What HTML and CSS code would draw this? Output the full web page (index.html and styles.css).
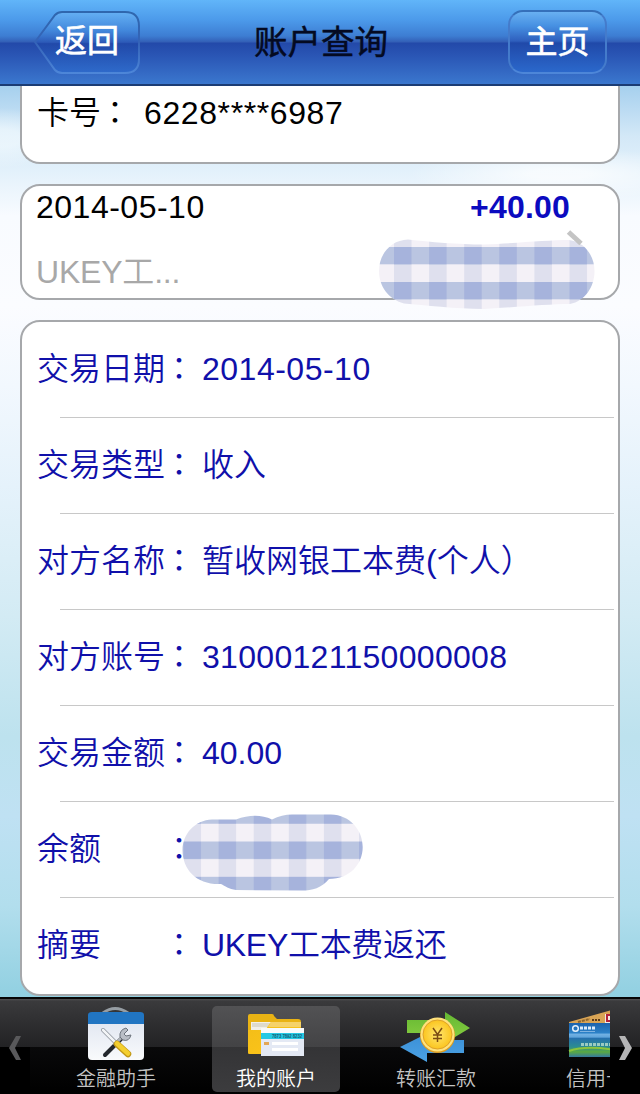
FILE: index.html
```html
<!DOCTYPE html>
<html lang="zh-CN">
<head>
  <meta charset="UTF-8" />
  <meta name="viewport" content="width=device-width, initial-scale=1.0"/>
  <title>账户查询</title>
  <link rel="stylesheet" href="styles.css">
</head>
<body>
  <div class="app">
    <!-- Header -->
    <header class="header">
      <button class="btn btn-back">
        <svg class="btn-shape" width="108" height="66" viewBox="0 0 108 66">
          <defs>
            <linearGradient id="btnFill" x1="0" y1="0" x2="0" y2="1">
              <stop offset="0" stop-color="#6bb4f4"/>
              <stop offset="0.3" stop-color="#4288dc"/>
              <stop offset="0.5" stop-color="#2a58b8"/>
              <stop offset="0.52" stop-color="#2049a9"/>
              <stop offset="1" stop-color="#2d6bcd"/>
            </linearGradient>
            <linearGradient id="btnEdge" x1="0" y1="0" x2="0" y2="1">
              <stop offset="0" stop-color="#2f67ae"/>
              <stop offset="0.5" stop-color="#3463b8"/>
              <stop offset="1" stop-color="#4d86d8"/>
            </linearGradient>
          </defs>
          <path d="M2 32 L22 5 Q25 2 29 2 H92 Q106 2 106 16 V49 Q106 63 92 63 H29 Q25 63 22 60 Z" fill="url(#btnFill)" fill-opacity="0.75" stroke="url(#btnEdge)" stroke-width="2"/>
        </svg>
        <span>返回</span>
      </button>
      <h1>账户查询</h1>
      <button class="btn btn-home"><span>主页</span></button>
    </header>

    <!-- Account details -->
    <main class="content">
      <div class="card card-number">
        <span class="label">卡号</span><span class="colon">：</span><span class="number">6228****6987</span>
      </div>

      <div class="card card-entry">
        <div class="entry-top">
          <span class="date">2014-05-10</span>
          <span class="amount">+40.00</span>
        </div>
        <div class="entry-note">UKEY工...</div>
        <svg class="mask mask-entry" width="218" height="72" viewBox="378 238 218 72">
          <defs>
            <pattern id="check1" x="394" y="247" width="35.1" height="35" patternUnits="userSpaceOnUse">
              <rect width="36" height="36" fill="#f4f1f7"/>
              <rect width="17.5" height="36" fill="#dfe0ee"/>
              <rect width="36" height="17.3" fill="#bac5e1"/>
              <rect width="17.5" height="17.3" fill="#a6b3dc"/>
            </pattern>
          </defs>
          <path d="M408 239.500 C430 242 458 244.500 484 244.500 C520 243 548 240 569 240 C585 242 594.500 256 594.500 271 C594.500 287 585 301 570 304 C548 304 520 307 484 309 C455 309 425 305 404 303.500 C388 299 379 286 379 271 C379 254 391 240 408 239.500 Z" fill="url(#check1)"/>
        </svg>
        <svg class="chevron" width="18" height="16" viewBox="0 0 18 16">
          <path d="M2.500 2 L15 13.500" fill="none" stroke="#c4c4c4" stroke-width="5"/>
        </svg>
      </div>

      <div class="card card-detail">
        <div class="row"><span class="label">交易日期</span><span class="colon">：</span><span class="value date">2014-05-10</span></div>
        <div class="row"><span class="label">交易类型</span><span class="colon">：</span><span class="value">收入</span></div>
        <div class="row"><span class="label">对方名称</span><span class="colon">：</span><span class="value">暂收网银工本费(个人）</span></div>
        <div class="row"><span class="label">对方账号</span><span class="colon">：</span><span class="value account">31000121150000008</span></div>
        <div class="row"><span class="label">交易金额</span><span class="colon">：</span><span class="value">40.00</span></div>
        <div class="row">
          <span class="label">余额</span><span class="colon">：</span>
          <svg class="mask mask-balance" width="182" height="78" viewBox="182 813 182 78">
            <defs>
              <pattern id="check2" x="183.500" y="841.500" width="35.100" height="35.300" patternUnits="userSpaceOnUse">
                <rect width="36" height="36" fill="#f4f1f7"/>
                <rect width="17.500" height="36" fill="#dfe0ee"/>
                <rect width="36" height="17.500" fill="#bac5e1"/>
                <rect width="17.500" height="17.500" fill="#a6b3dc"/>
              </pattern>
            </defs>
            <path d="M212 819.500 H236 Q256 812 272 819.500 Q282 814.500 292 814.500 H331 C350 815 362.700 830 362.700 847 C362.700 864 350 879 329 879 C322 888 312 890.500 302 890.500 L236 890 C229 889 225 886 221 884 C197 885 182.500 870 182.500 850 C182.500 834 195 820 212 819.500 Z" fill="url(#check2)"/>
          </svg>
        </div>
        <div class="row"><span class="label">摘要</span><span class="colon">：</span><span class="value summary">UKEY工本费返还</span></div>
      </div>
    </main>

    <!-- Bottom tabs -->
    <nav class="tabbar">
      <div class="arrow arrow-left">
        <svg width="14" height="24" viewBox="0 0 14 24"><path d="M8 0 H13 L7 12 L13 24 H8 L1 12 Z" fill="#59595b"/></svg>
      </div>
      <div class="tabs">
        <div class="tab">
          <svg class="icon" width="64" height="56" viewBox="0 0 64 56">
            <defs>
              <linearGradient id="boxFill" x1="0" y1="0" x2="0" y2="1">
                <stop offset="0" stop-color="#dde3ef"/>
                <stop offset="1" stop-color="#f9fafc"/>
              </linearGradient>
            </defs>
            <path d="M19 7 Q31 -2 44 7" fill="none" stroke="#969da3" stroke-width="3"/>
            <rect x="4" y="8" width="56" height="46" rx="4" fill="url(#boxFill)"/>
            <path d="M4 18 V9 Q4 6 8 6 H56 Q60 6 60 9 V18 Z" fill="#2175c2"/>
            <path d="M21 49 L39 31" stroke="#24282d" stroke-width="4" stroke-linecap="round"/>
            <path d="M30 39 L40 29" stroke="#aeb3ba" stroke-width="3"/>
            <path d="M42 22 Q35 24 36 31 L39 34 Q45 36 47 29 L42 30 L40 28 L44 24 Z" fill="#b9bec6" stroke="#6c737c" stroke-width="1"/>
            <path d="M19 24 L33 38" stroke="#8d949c" stroke-width="4" stroke-linecap="round"/>
            <path d="M19 24 L33 38" stroke="#f2f4f6" stroke-width="2.500" stroke-linecap="round"/>
            <path d="M33 38 L44 48" stroke="#c29817" stroke-width="6.500" stroke-linecap="round"/>
            <path d="M33 37.500 L44 47.500" stroke="#f4cf2f" stroke-width="4.500" stroke-linecap="round"/>
          </svg>
          <span>金融助手</span>
        </div>
        <div class="tab active">
          <svg class="icon" width="64" height="56" viewBox="0 0 64 56">
            <defs>
              <linearGradient id="folder" x1="0" y1="0" x2="1" y2="1">
                <stop offset="0" stop-color="#f2bd18"/>
                <stop offset="1" stop-color="#ffc61a"/>
              </linearGradient>
            </defs>
            <path d="M4 47 V10 Q4 8 6 8 H28 Q30 8 30 10 L33 13 H54 Q57 13 57 16 V48 H6 Q4 48 4 47 Z" fill="#e9b314"/>
            <path d="M7 16 H28 V24 H7 Z" fill="#f2f0e8"/>
            <path d="M8 18 H26 M8 20 H24" stroke="#c9c4b4" stroke-width="1"/>
            <path d="M4 24 H19 Q22 24 24 20 L27 16 H57 V48 H6 Q4 48 4 46 Z" fill="url(#folder)"/>
            <path d="M27 16 H57 V21 H24 Z" fill="#f5d269"/>
            <rect x="17" y="22" width="43" height="28" fill="#e4e9f4"/>
            <rect x="17" y="22" width="43" height="5" fill="#f8fafc"/>
            <rect x="17" y="27" width="43" height="6" fill="#26c9e5"/>
            <text x="28" y="32" textLength="30" lengthAdjust="spacingAndGlyphs" class="card-digits">7873 7892 8232</text>
            <rect x="20" y="36" width="5" height="3" fill="#e3a757"/>
            <rect x="28" y="36" width="26" height="3" fill="#fff"/>
            <rect x="28" y="42" width="26" height="3" fill="#fff"/>
          </svg>
          <span>我的账户</span>
        </div>
        <div class="tab">
          <svg class="icon icon-transfer" width="72" height="56" viewBox="1 0 72 56">
            <defs>
              <linearGradient id="green" x1="0" y1="0" x2="0" y2="1">
                <stop offset="0" stop-color="#64b832"/>
                <stop offset="1" stop-color="#8bcf42"/>
              </linearGradient>
              <linearGradient id="blue" x1="0" y1="0" x2="0" y2="1">
                <stop offset="0" stop-color="#3b8fd6"/>
                <stop offset="1" stop-color="#4ba2e4"/>
              </linearGradient>
              <radialGradient id="coin">
                <stop offset="0" stop-color="#ffe66e"/>
                <stop offset="1" stop-color="#fbc51f"/>
              </radialGradient>
            </defs>
            <path d="M8 14 H46 V6 L71 22 L46 37 V27 H8 Z" fill="url(#green)"/>
            <path d="M1 41 L27 28 V34 H65 V47 H28 V56 Z" fill="url(#blue)"/>
            <circle cx="38.500" cy="29.500" r="17.500" fill="#dc9b20"/>
            <circle cx="38.500" cy="28.500" r="17" fill="#ffe27c"/>
            <circle cx="38.500" cy="28.500" r="14.500" fill="url(#coin)" stroke="#dfa129" stroke-width="1"/>
            <path d="M34 22 L38.500 28.500 L43 22 M38.500 28 V36 M34 29 H43 M34 32.500 H43" fill="none" stroke="#7b4b13" stroke-width="1.500"/>
          </svg>
          <span>转账汇款</span>
        </div>
        <div class="tab">
          <svg class="icon" width="64" height="56" viewBox="0 0 64 56">
            <defs>
              <linearGradient id="bankCard" x1="0" y1="0" x2="0" y2="1">
                <stop offset="0" stop-color="#1b62ad"/>
                <stop offset="0.3" stop-color="#2c82c8"/>
                <stop offset="0.32" stop-color="#73b2e4"/>
                <stop offset="0.42" stop-color="#5fa4da"/>
                <stop offset="0.44" stop-color="#256fae"/>
                <stop offset="0.7" stop-color="#2c8c91"/>
                <stop offset="0.85" stop-color="#5aa941"/>
                <stop offset="1" stop-color="#3579a0"/>
              </linearGradient>
            </defs>
            <path d="M5 16 L48 4 V30 H5 Z" fill="#d9a455"/>
            <path d="M14 16 L26 13" stroke="#8d6730" stroke-width="2" stroke-dasharray="3 1"/>
            <path d="M28 14 H37" stroke="#5b3a18" stroke-width="2" stroke-dasharray="2 1"/>
            <rect x="41" y="8" width="8" height="9" fill="#f3e9e4"/>
            <path d="M47 9 H43 V15 H47" fill="none" stroke="#b3243b" stroke-width="2"/>
            <rect x="5" y="17" width="56" height="34" fill="url(#bankCard)"/>
            <circle cx="11.500" cy="22.500" r="2.800" fill="none" stroke="#e5f1fb" stroke-width="1.500"/>
            <path d="M16 22 H31" stroke="#dcecfb" stroke-width="3" stroke-dasharray="3 1"/>
            <path d="M16 25.500 H31" stroke="#7fb2df" stroke-width="1"/>
            <path d="M17 38.500 H48" stroke="#9bcbc2" stroke-width="3" stroke-dasharray="3 1"/>
            <path d="M5 45 Q25 38 61 46" fill="none" stroke="#8cc43d" stroke-width="2"/>
          </svg>
          <span>信用卡</span>
        </div>
      </div>
      <div class="arrow arrow-right">
        <svg width="14" height="24" viewBox="0 0 14 24"><path d="M0 0 H6 L13 12 L6 24 H0 L6 12 Z" fill="#b5b5b6"/></svg>
      </div>
    </nav>
  </div>
</body>
</html>
```
FILE: styles.css
```css
* { box-sizing: border-box; }
body { margin: 0; font-family: "Liberation Sans", "Noto Sans CJK SC", sans-serif; font-size: 32px; font-weight: 350; }
.app { width: 640px; height: 1094px; display: flex; flex-direction: column; overflow: hidden; }

.header {
  height: 86px;
  flex: none;
  display: flex;
  justify-content: space-between;
  padding: 10px 33px 0;
  border-bottom: 2px solid #1c3c74;
  background: linear-gradient(#61b5f9 0, #4c9aea 20px, #3d7dd2 36px, #335fb6 42px, #2349a9 43px, #2a56b5 56px, #3b77ce 84px);
}
.header h1 { margin: 0 7px 0 0; font-size: 33.5px; line-height: 66px; font-weight: 400; color: #040a22; -webkit-text-stroke: 0.5px #040a22; }
.btn {
  position: relative;
  height: 64px;
  padding: 0;
  border: none;
  background: none;
  color: #fff;
  font-family: inherit;
  font-size: 32px;
  line-height: 60px;
  font-weight: 400;
  -webkit-text-stroke: 0.6px #fff;
}
.btn span { position: relative; display: block; }
.btn-back { width: 108px; padding-bottom: 3px; }
.btn-shape { position: absolute; left: 0; top: 0; }
.btn-home {
  width: 99px;
  border: 2px solid #447bcb;
  border-top-color: #3570ba;
  border-bottom-color: #4d86d8;
  border-radius: 15px;
  line-height: 57px;
  background: linear-gradient(#69b0f1 0, #4690e2 14px, #2f5fbd 29px, #2049a9 31px, #2b68cb 60px);
}

.content {
  height: 911px;
  flex: none;
  padding: 0 20px;
  overflow: hidden;
  background:
    radial-gradient(ellipse 70px 30px at 0 52px, rgba(246,252,255,0.6) 30%, rgba(246,252,255,0) 100%),
    radial-gradient(ellipse 150px 26px at 560px 88px, rgba(255,255,255,0.7) 20%, rgba(255,255,255,0) 100%),
    linear-gradient(#a6d0ee 0, #d3e8f7 50px, #e3f1fb 85px, #f8fbff 130px, #fbfcff 220px, #f2f8fe 300px, #e5f2fb 400px, #d3ebf4 530px, #bde2ee 650px, #bfe1f3 730px, #b2deed 820px, #91d0e1 911px);
}
.card { background: #fff; border: 2px solid #a6a8ab; border-radius: 20px; margin-bottom: 20px; }
.card-number { height: 78px; padding: 3px 0 0 15px; border-top: none; border-radius: 0 0 20px 20px; line-height: 48px; display: flex; }
.card-number .number { margin-left: 13px; letter-spacing: 0.6px; }
.colon { font-family: "Liberation Sans", "Noto Sans CJK TC", sans-serif; width: 32px; margin-left: -2px; }

.card-entry { position: relative; height: 116px; padding: 0 48px 0 14px; }
.entry-top { display: flex; justify-content: space-between; line-height: 42px; }
.date { letter-spacing: 0.5px; }
.amount { color: #0b0bc0; font-weight: bold; letter-spacing: 0.2px; }
.entry-note { color: #a8a8a8; line-height: 42px; margin-top: 23px; letter-spacing: -0.2px; }
.chevron { position: absolute; right: 34px; top: 44px; }
.mask-entry { position: absolute; right: 22px; top: 52px; }

.card-detail { height: 676px; color: #1010aa; }
.row { position: relative; height: 96px; padding-left: 15px; line-height: 94px; display: flex; align-items: baseline; }
.row:not(:last-child)::after { content: ""; position: absolute; left: 38px; right: 4px; bottom: 0; height: 1px; background: #c8c8c8; }
.row .label { width: 128px; }
.value { margin-left: 7px; letter-spacing: 0; }
.value.date { letter-spacing: 0.5px; }
.value.account { letter-spacing: 0.3px; }
.value.summary { letter-spacing: -0.3px; }
.mask-balance { position: absolute; left: 160px; top: 11px; }

.tabbar {
  height: 97px;
  flex: none;
  display: flex;
  background: linear-gradient(#060606 0, #060606 2px, #545456 2px, #3a3a3c 4px, #222224 50px, #09090a 50px, #000 97px);
}
.arrow { width: 30px; flex: none; display: flex; align-items: center; padding-top: 5px; }
.arrow-left { padding-left: 8px; background: linear-gradient(transparent 50px, #000 50px); }
.arrow-right { padding-left: 9px; background: linear-gradient(transparent 50px, #000 50px); }
.tabs { width: 580px; display: flex; gap: 32px; padding: 9px 0 2px 22px; overflow: hidden; }
.tab {
  width: 128px;
  flex: none;
  border-radius: 5px;
  color: #c4c4c4;
  font-size: 20px;
  line-height: 34px;
  display: flex;
  flex-direction: column;
  align-items: center;
}
.tab.active { color: #fff; background: linear-gradient(#525254 0, #434345 41px, #343436 41px, #3c3c3e 86px); }
.tab .icon { flex: none; }
.card-digits { font-size: 5px; font-weight: bold; fill: #145a70; }
```
